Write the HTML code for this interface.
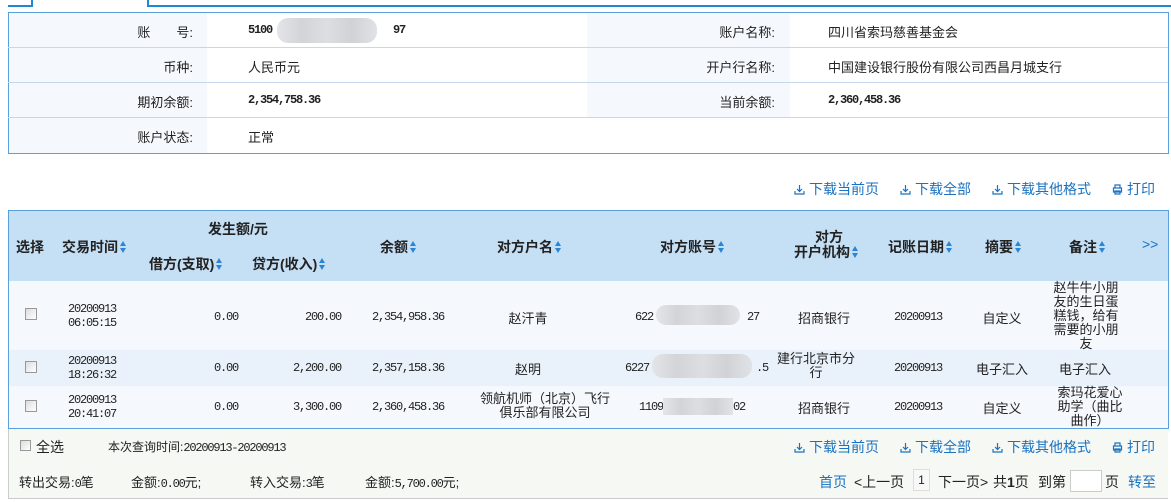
<!DOCTYPE html>
<html><head><meta charset="utf-8">
<style>
*{margin:0;padding:0;box-sizing:border-box}
body{width:1171px;height:502px;position:relative;background:#fff;font-family:"Liberation Sans","Noto Sans CJK SC",sans-serif;font-size:13px;color:#222;overflow:hidden}
.a{position:absolute;white-space:nowrap}
.c{transform:translateX(-50%);text-align:center}
.r{transform:translateX(-100%);text-align:right}
.m{font-family:"Liberation Mono","Noto Sans CJK SC",monospace;font-size:12px;letter-spacing:-1.2px}
.b{font-weight:bold}
.blue{color:#1a72c0}
.sort{display:inline-block;width:7px;height:12px;vertical-align:-1px;margin-left:2px;position:relative}
.sort:before{content:"";position:absolute;left:0;top:0;border-left:3.5px solid transparent;border-right:3.5px solid transparent;border-bottom:5px solid #2a86d4}
.sort:after{content:"";position:absolute;left:0;top:7px;border-left:3.5px solid transparent;border-right:3.5px solid transparent;border-top:5px solid #2a86d4}
.cb{position:absolute;width:12px;height:12px;border:1px solid #999;background:linear-gradient(135deg,#ddd,#fff)}
.blur{position:absolute;height:22px;border-radius:11px;background:linear-gradient(90deg,#e3e5e8,#d2d4d8,#dcdee2,#d0d2d6,#e0e2e5)}
.ico{display:inline-block;width:11px;height:11px;vertical-align:-1px;margin-right:4px}
.lines{position:absolute;left:8px;width:1160px;height:1px;background:#c5d7ea}
.lk{position:absolute;white-space:nowrap;color:#1a72c0;font-size:14px}
.h{position:absolute;white-space:nowrap;font-weight:bold;font-size:14px}
</style></head><body>
<div class="a" style="left:8px;top:5px;width:25px;height:2px;background:#1e88d0"></div>
<div class="a" style="left:31px;top:0;width:2px;height:7px;background:#1e88d0"></div>
<div class="a" style="left:147px;top:0;width:2px;height:7px;background:#1e88d0"></div>
<div class="a" style="left:147px;top:5px;width:1024px;height:2px;background:#1e88d0"></div>

<div class="a" style="left:8px;top:12px;width:1161px;height:142px;border:1px solid #5aa0dc;background:#fff"></div>
<div class="a" style="left:9px;top:13px;width:198px;height:140px;background:#f5f9fd"></div>
<div class="a" style="left:587px;top:13px;width:203px;height:105px;background:#f5f9fd"></div>
<div class="lines" style="top:47px"></div>
<div class="lines" style="top:82px"></div>
<div class="lines" style="top:117px"></div>
<div class="a r" style="left:193px;top:22px">账　　号:</div>
<div class="a r" style="left:193px;top:57px">币种:</div>
<div class="a r" style="left:193px;top:92px">期初余额:</div>
<div class="a r" style="left:193px;top:127px">账户状态:</div>
<div class="a m b" style="left:248px;top:23px">5100</div>
<div class="blur" style="left:277px;top:18px;width:100px;height:25px"></div>
<div class="a m b" style="left:393px;top:23px">97</div>
<div class="a" style="left:248px;top:57px">人民币元</div>
<div class="a m b" style="left:248px;top:93px">2,354,758.36</div>
<div class="a" style="left:248px;top:127px">正常</div>
<div class="a r" style="left:775px;top:22px">账户名称:</div>
<div class="a r" style="left:775px;top:57px">开户行名称:</div>
<div class="a r" style="left:775px;top:92px">当前余额:</div>
<div class="a" style="left:828px;top:22px">四川省索玛慈善基金会</div>
<div class="a" style="left:828px;top:57px">中国建设银行股份有限公司西昌月城支行</div>
<div class="a m b" style="left:828px;top:93px">2,360,458.36</div>

<div class="lk" style="left:794px;top:179px"><svg class="ico" viewBox="0 0 11 11"><path d="M5.5 1v6M3 5l2.5 2.5L8 5M1 7v3h9V7" stroke="#1a72c0" fill="none" stroke-width="1.2"/></svg>下载当前页</div>
<div class="lk" style="left:900px;top:179px"><svg class="ico" viewBox="0 0 11 11"><path d="M5.5 1v6M3 5l2.5 2.5L8 5M1 7v3h9V7" stroke="#1a72c0" fill="none" stroke-width="1.2"/></svg>下载全部</div>
<div class="lk" style="left:992px;top:179px"><svg class="ico" viewBox="0 0 11 11"><path d="M5.5 1v6M3 5l2.5 2.5L8 5M1 7v3h9V7" stroke="#1a72c0" fill="none" stroke-width="1.2"/></svg>下载其他格式</div>
<div class="lk" style="left:1112px;top:179px"><svg class="ico" viewBox="0 0 11 11"><path d="M3 4V1h5v3M1.5 4h8v4h-8zM3 7h5v3H3z" stroke="#1a72c0" fill="none" stroke-width="1.2"/></svg>打印</div>

<div class="a" style="left:8px;top:210px;width:1161px;height:219px;border:1px solid #5aa0dc;background:#f5f9fd"></div>
<div class="a" style="left:9px;top:211px;width:1159px;height:70px;background:#c5dff5"></div>
<div class="a" style="left:9px;top:350px;width:1159px;height:36px;background:#e9f2fa"></div>

<div class="h" style="left:16px;top:237px">选择</div>
<div class="h" style="left:62px;top:237px">交易时间<span class="sort"></span></div>
<div class="h" style="left:208px;top:219px">发生额/元</div>
<div class="h" style="left:149px;top:254px">借方(支取)<span class="sort"></span></div>
<div class="h" style="left:252px;top:254px">贷方(收入)<span class="sort"></span></div>
<div class="h" style="left:380px;top:237px">余额<span class="sort"></span></div>
<div class="h" style="left:497px;top:237px">对方户名<span class="sort"></span></div>
<div class="h" style="left:660px;top:237px">对方账号<span class="sort"></span></div>
<div class="h" style="left:815px;top:230px;line-height:15px">对方</div>
<div class="h" style="left:794px;top:245px;line-height:15px">开户机构<span class="sort"></span></div>
<div class="h" style="left:888px;top:237px">记账日期<span class="sort"></span></div>
<div class="h" style="left:985px;top:237px">摘要<span class="sort"></span></div>
<div class="h" style="left:1069px;top:237px">备注<span class="sort"></span></div>
<div class="a blue" style="left:1142px;top:236px;font-size:14px">&gt;&gt;</div>

<div class="cb" style="left:25px;top:308px"></div>
<div class="a m" style="left:68px;top:302px;line-height:14px">20200913<br>06:05:15</div>
<div class="a m r" style="left:238px;top:310px">0.00</div>
<div class="a m r" style="left:341px;top:310px">200.00</div>
<div class="a m r" style="left:444px;top:310px">2,354,958.36</div>
<div class="a c" style="left:528px;top:308px">赵汗青</div>
<div class="a m" style="left:635px;top:310px">622</div>
<div class="blur" style="left:656px;top:305px;width:84px;height:20px"></div>
<div class="a m" style="left:747px;top:310px">27</div>
<div class="a c" style="left:824px;top:308px">招商银行</div>
<div class="a m c" style="left:918px;top:310px">20200913</div>
<div class="a c" style="left:1002px;top:308px">自定义</div>
<div class="a c" style="left:1086px;top:281px;line-height:14px;white-space:normal;width:68px">赵牛牛小朋友的生日蛋糕钱，给有需要的小朋友</div>

<div class="cb" style="left:25px;top:361px"></div>
<div class="a m" style="left:68px;top:354px;line-height:14px">20200913<br>18:26:32</div>
<div class="a m r" style="left:238px;top:361px">0.00</div>
<div class="a m r" style="left:341px;top:361px">2,200.00</div>
<div class="a m r" style="left:444px;top:361px">2,357,158.36</div>
<div class="a c" style="left:528px;top:359px">赵明</div>
<div class="a m" style="left:625px;top:361px">6227</div>
<div class="blur" style="left:652px;top:354px;width:100px;height:24px"></div>
<div class="a m" style="left:756px;top:361px">.5</div>
<div class="a c" style="left:816px;top:352px;line-height:14px">建行北京市分<br>行</div>
<div class="a m c" style="left:918px;top:361px">20200913</div>
<div class="a c" style="left:1002px;top:359px">电子汇入</div>
<div class="a c" style="left:1085px;top:359px">电子汇入</div>

<div class="cb" style="left:25px;top:400px"></div>
<div class="a m" style="left:68px;top:393px;line-height:14px">20200913<br>20:41:07</div>
<div class="a m r" style="left:238px;top:400px">0.00</div>
<div class="a m r" style="left:341px;top:400px">3,300.00</div>
<div class="a m r" style="left:444px;top:400px">2,360,458.36</div>
<div class="a c" style="left:545px;top:392px;line-height:14px">领航机师（北京）飞行<br>俱乐部有限公司</div>
<div class="a m" style="left:639px;top:400px">1109</div>
<div class="blur" style="left:663px;top:398px;width:70px;height:17px;border-radius:0"></div>
<div class="a m" style="left:733px;top:400px">02</div>
<div class="a c" style="left:824px;top:398px">招商银行</div>
<div class="a m c" style="left:918px;top:400px">20200913</div>
<div class="a c" style="left:1002px;top:398px">自定义</div>
<div class="a c" style="left:1090px;top:386px;line-height:14px">索玛花爱心<br>助学（曲比<br>曲作）</div>

<div class="a" style="left:8px;top:429px;width:1160px;height:70px;background:#f6f8f4;border-left:1px solid #ccc;border-bottom:1px solid #ccc"></div>
<div class="cb" style="left:20px;top:440px;width:11px;height:11px"></div>
<div class="a" style="left:36px;top:437px;font-size:14px">全选</div>
<div class="a" style="left:108px;top:438px;font-size:12px">本次查询时间:<span class="m">20200913-20200913</span></div>
<div class="lk" style="left:794px;top:437px"><svg class="ico" viewBox="0 0 11 11"><path d="M5.5 1v6M3 5l2.5 2.5L8 5M1 7v3h9V7" stroke="#1a72c0" fill="none" stroke-width="1.2"/></svg>下载当前页</div>
<div class="lk" style="left:900px;top:437px"><svg class="ico" viewBox="0 0 11 11"><path d="M5.5 1v6M3 5l2.5 2.5L8 5M1 7v3h9V7" stroke="#1a72c0" fill="none" stroke-width="1.2"/></svg>下载全部</div>
<div class="lk" style="left:992px;top:437px"><svg class="ico" viewBox="0 0 11 11"><path d="M5.5 1v6M3 5l2.5 2.5L8 5M1 7v3h9V7" stroke="#1a72c0" fill="none" stroke-width="1.2"/></svg>下载其他格式</div>
<div class="lk" style="left:1112px;top:437px"><svg class="ico" viewBox="0 0 11 11"><path d="M3 4V1h5v3M1.5 4h8v4h-8zM3 7h5v3H3z" stroke="#1a72c0" fill="none" stroke-width="1.2"/></svg>打印</div>

<div class="a" style="left:19px;top:472px">转出交易:<span class="m">0</span>笔</div>
<div class="a" style="left:131px;top:472px">金额:<span class="m">0.00</span>元;</div>
<div class="a" style="left:250px;top:472px">转入交易:<span class="m">3</span>笔</div>
<div class="a" style="left:365px;top:472px">金额:<span class="m">5,700.00</span>元;</div>
<div class="a blue" style="left:819px;top:472px;font-size:14px">首页</div>
<div class="a" style="left:854px;top:472px;font-size:14px">&lt;上一页</div>
<div class="a" style="left:913px;top:469px;width:17px;height:22px;border:1px solid #ddd;background:#f8f8f8;text-align:center;line-height:20px;font-size:12px">1</div>
<div class="a" style="left:938px;top:472px;font-size:14px">下一页&gt;</div>
<div class="a" style="left:993px;top:472px;font-size:14px">共<b>1</b>页</div>
<div class="a" style="left:1038px;top:472px;font-size:14px">到第</div>
<div class="a" style="left:1070px;top:470px;width:32px;height:22px;border:1px solid #ccc;background:#fff"></div>
<div class="a" style="left:1105px;top:472px;font-size:14px">页</div>
<div class="a blue" style="left:1128px;top:472px;font-size:14px">转至</div>
</body></html>
